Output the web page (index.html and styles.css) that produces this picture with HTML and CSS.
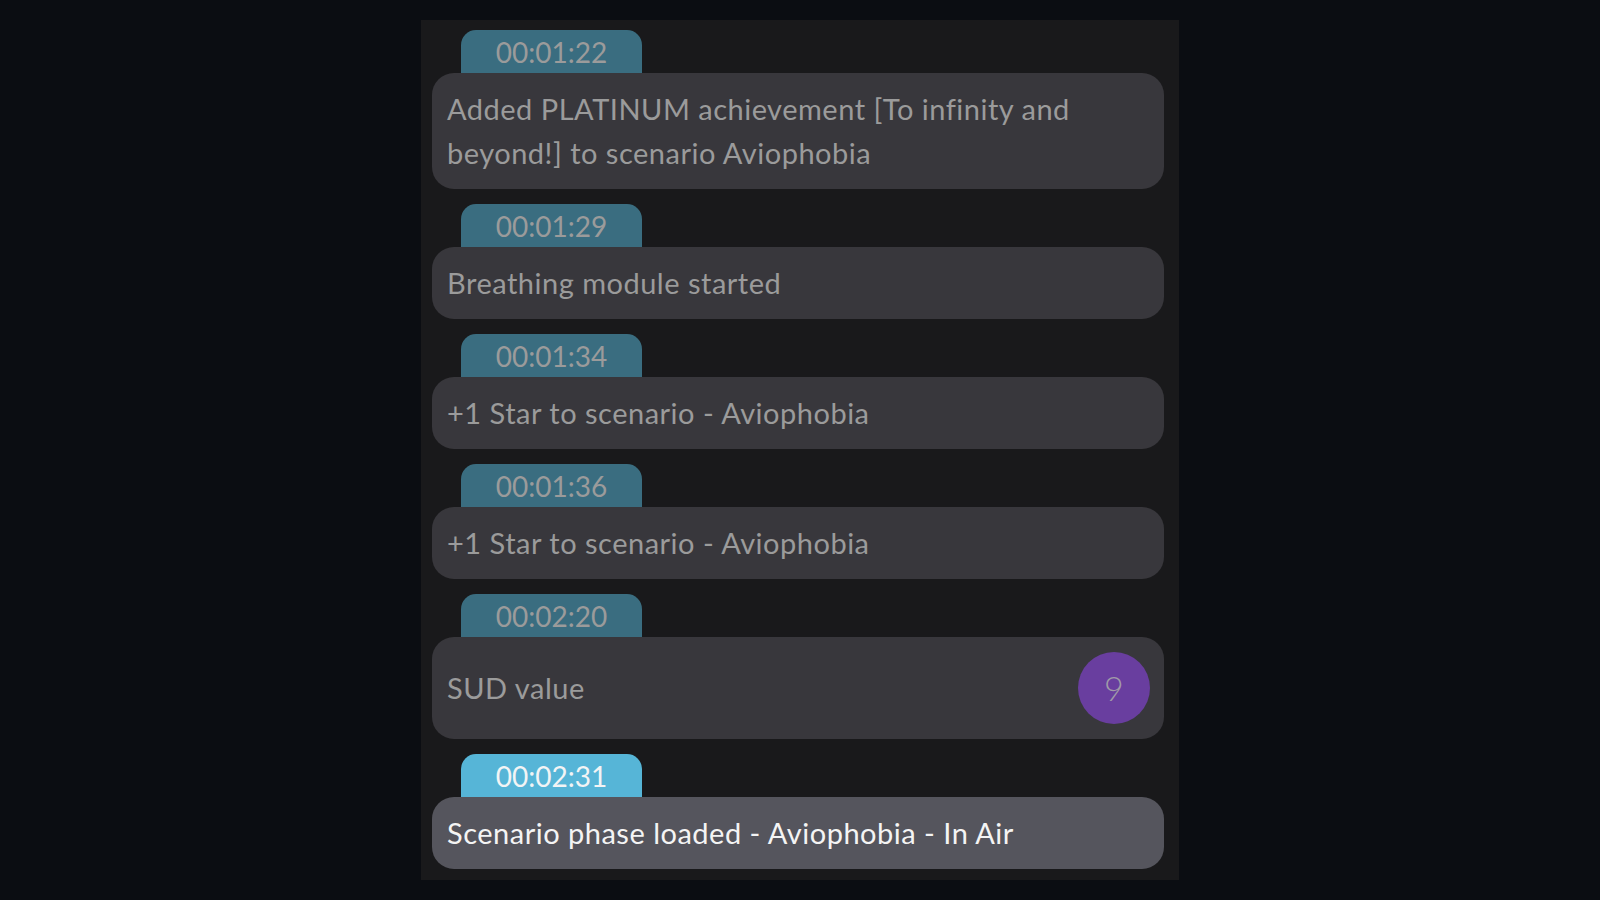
FILE: index.html
```html
<!DOCTYPE html>
<html>
<head>
    <title>Session Log</title>
    <link rel="stylesheet" href="styles.css">
</head>
<body>
    <div class="log">
        <div class="entry">
            <div class="time">00:01:22</div>
            <div class="message">Added PLATINUM achievement [To infinity and beyond!] to scenario Aviophobia</div>
        </div>
        <div class="entry">
            <div class="time">00:01:29</div>
            <div class="message">Breathing module started</div>
        </div>
        <div class="entry">
            <div class="time">00:01:34</div>
            <div class="message">+1 Star to scenario - Aviophobia</div>
        </div>
        <div class="entry">
            <div class="time">00:01:36</div>
            <div class="message">+1 Star to scenario - Aviophobia</div>
        </div>
        <div class="entry">
            <div class="time">00:02:20</div>
            <div class="message with-value">
                <span>SUD value</span>
                <span class="value">9</span>
            </div>
        </div>
        <div class="entry current">
            <div class="time">00:02:31</div>
            <div class="message">Scenario phase loaded - Aviophobia - In Air</div>
        </div>
    </div>
</body>
</html>
```

FILE: styles.css
```css
body {
    margin: 0;
    padding: 20px 0 21px;
    background-color: #0b0d12;
    font-family: 'Lato', 'Noto Sans', sans-serif;
}

.log {
    width: 758px;
    margin: 0 auto;
    padding: 10px 15px 11px 11px;
    box-sizing: border-box;
    background-color: #19191b;
    display: flex;
    flex-direction: column;
    gap: 15px;
}

.entry {
    display: flex;
    flex-direction: column;
    align-items: flex-start;
}

.time {
    width: 181px;
    height: 43px;
    margin-left: 29px;
    border-radius: 15px 15px 0 0;
    background-color: #3a6d80;
    color: #9b9b9b;
    font-size: 28px;
    line-height: 45px;
    text-align: center;
}

.message {
    align-self: stretch;
    padding: 14px 15px;
    border-radius: 22px;
    background-color: #38373c;
    color: #9b9b9b;
    font-size: 29px;
    letter-spacing: 0.5px;
    line-height: 44px;
}

.with-value {
    display: flex;
    align-items: center;
    justify-content: space-between;
    padding: 15px 14px 15px 15px;
}

.value {
    width: 72px;
    height: 72px;
    border-radius: 50%;
    background-color: #693e9f;
    color: #a09aa8;
    font-size: 34px;
    font-weight: 300;
    display: flex;
    align-items: center;
    justify-content: center;
}

.current .time {
    background-color: #56b5d7;
    color: #f2f4f5;
}

.current .message {
    background-color: #55555d;
    color: #f4f4f4;
}
```
